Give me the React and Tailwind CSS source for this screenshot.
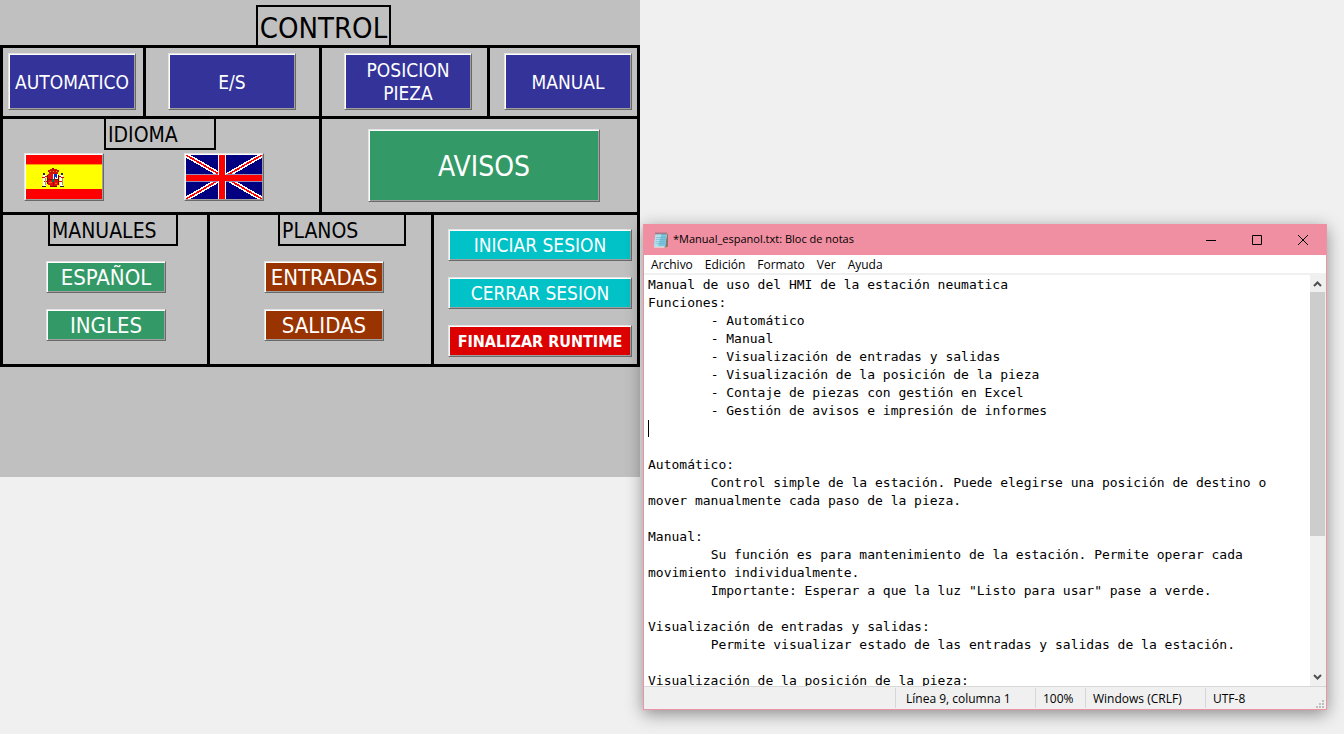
const BEVEL =
  "border border-t-[#e3e3e3] border-l-[#e3e3e3] border-r-[#696969] border-b-[#696969] shadow-[inset_1px_1px_0_#fff,inset_-1px_-1px_0_#a0a0a0]";

const TONES = {
  blue: "bg-[#333399]",
  green: "bg-[#339966]",
  brown: "bg-[#993300]",
  cyan: "bg-[#00c2c7]",
  red: "bg-[#dd0000]",
};

function HmiButton({ tone, className, children }) {
  return (
    <button type="button" className={`${BEVEL} ${TONES[tone]} flex items-center justify-center text-center text-white ${className}`}>
      {children}
    </button>
  );
}

function SectionTitle({ className, children }) {
  return (
    <h2 className={`h-[31px] border-2 border-t-0 border-black pl-[2px] text-[21px] leading-[32px] ${className}`}>{children}</h2>
  );
}

function SpainFlag() {
  return (
    <svg viewBox="0 0 76 44" className="block h-[44px] w-[76px]" shapeRendering="crispEdges" aria-hidden="true">
      <rect width="76" height="44" fill="#ff0000" />
      <rect y="9" width="76" height="25" fill="#ffff00" />
      <rect y="9" width="76" height="1" fill="#ff9900" />
      <rect x="17" y="20" width="3" height="11" fill="#fff" />
      <rect x="34" y="20" width="3" height="11" fill="#fff" />
      <path d="M17 18h2v2h-2zM35 18h2v2h-2zM16 31h4v1h-4zM34 31h4v1h-4z" fill="#222" />
      <path d="M16 22h3v1h-3zM18 26h3v1h-3zM35 22h3v1h-3zM33 26h3v1h-3zM19 21h2v1h-2zM33 21h2v1h-2z" fill="#d00" />
      <path d="M19 23h1v7h-1zM36 23h1v7h-1z" fill="#999" />
      <path d="M24 14h7v1h2v2h-1v2h-9v-2h-1v-2h2z" fill="#c81400" />
      <path d="M26 13h2v1h-2z" fill="#900" />
      <path d="M24 16h1v1h-1zM27 16h1v1h-1zM30 16h1v1h-1z" fill="#f80" />
      <path d="M22 19h10v11h-1v1h-7v-1h-2z" fill="#e01010" />
      <path d="M27 19h5v5h-5z" fill="#fff" />
      <path d="M28 19h3v4h-1v-1h-1v2h-1z" fill="#0033cc" />
      <path d="M21 20h1v9h-1zM32 20h1v10h-1zM24 31h7v1h-7z" fill="#7a0000" />
      <path d="M22 24h10v1h-10zM27 24h1v7h-1z" fill="#a00000" />
      <path d="M26 24h2v3h-2z" fill="#007050" />
      <path d="M23 27h3v1h-3zM29 28h2v1h-2z" fill="#f60" />
    </svg>
  );
}

function UkFlag() {
  return (
    <svg viewBox="0 0 76 44" className="block h-[44px] w-[76px]" shapeRendering="crispEdges" aria-hidden="true">
      <rect width="76" height="44" fill="#000080" />
      <path d="M0 0L76 44M76 0L0 44" stroke="#fff" strokeWidth="4.6" />
      <path d="M0 0L76 44M76 0L0 44" stroke="#ff0000" strokeWidth="1.6" />
      <rect y="19" width="76" height="8" fill="#9a8cb8" />
      <rect x="32" width="8" height="44" fill="#fff" />
      <rect y="20" width="76" height="6" fill="#ff0000" />
      <rect x="33" width="6" height="44" fill="#ff0000" />
    </svg>
  );
}

function FlagButton({ label, children }) {
  return (
    <button type="button" aria-label={label} className="h-[48px] w-[80px] border border-t-[#e3e3e3] border-l-[#e3e3e3] border-r-[#696969] border-b-[#696969]">
      <span className="block border border-t-white border-l-white border-r-[#a0a0a0] border-b-[#a0a0a0]">{children}</span>
    </button>
  );
}

function ControlPanel() {
  return (
    <main className="self-start bg-[#c0c0c0] pb-[110px] font-['DejaVu_Sans_Condensed','DejaVu_Sans',sans-serif] text-black">
      <header className="flex h-[45px] items-end justify-center pl-[7px]">
        <h1 className="h-[40px] border-2 border-b-0 border-black px-[2px] text-[29px] leading-[42px]">CONTROL</h1>
      </header>

      <div className="border-[3px] border-black">
        <section className="grid h-[71px] grid-cols-[143fr_176fr_168fr_147fr] border-b-[3px] border-black text-[19px] leading-[23px]">
          <div className="border-r-[3px] border-black pt-[5px] pl-[5px]">
            <HmiButton tone="blue" className="h-[57px] w-[128px] pt-px">AUTOMATICO</HmiButton>
          </div>
          <div className="border-r-[3px] border-black pt-[5px] pl-[22px]">
            <HmiButton tone="blue" className="h-[57px] w-[128px] pt-px">E/S</HmiButton>
          </div>
          <div className="border-r-[3px] border-black pt-[5px] pl-[22px]">
            <HmiButton tone="blue" className="h-[57px] w-[128px]">POSICION<br />PIEZA</HmiButton>
          </div>
          <div className="flex justify-end pt-[5px] pr-[5px]">
            <HmiButton tone="blue" className="h-[57px] w-[128px] pt-px">MANUAL</HmiButton>
          </div>
        </section>

        <section className="grid h-[96px] grid-cols-[319fr_315fr] border-b-[3px] border-black">
          <div className="border-r-[3px] border-black">
            <SectionTitle className="ml-[101px] w-[112px]">IDIOMA</SectionTitle>
            <div className="mt-[3px] flex gap-[80px] pl-[21px]">
              <FlagButton label="Español"><SpainFlag /></FlagButton>
              <FlagButton label="English"><UkFlag /></FlagButton>
            </div>
          </div>
          <div className="flex items-center pl-[46px]">
            <HmiButton tone="green" className="h-[73px] w-[232px] pt-[2px] text-[28px]">AVISOS</HmiButton>
          </div>
        </section>

        <section className="grid h-[149px] grid-cols-[207fr_224fr_203fr]">
          <div className="border-r-[3px] border-black">
            <SectionTitle className="ml-[45px] w-[130px]">MANUALES</SectionTitle>
            <div className="mt-[15px] flex flex-col gap-[16px] pl-[43px] text-[22px] leading-[28px]">
              <HmiButton tone="green" className="h-[32px] w-[120px] pt-[2px]">ESPAÑOL</HmiButton>
              <HmiButton tone="green" className="h-[32px] w-[120px] pt-[2px]">INGLES</HmiButton>
            </div>
          </div>
          <div className="border-r-[3px] border-black">
            <SectionTitle className="ml-[68px] w-[128px]">PLANOS</SectionTitle>
            <div className="mt-[15px] flex flex-col gap-[16px] pl-[54px] text-[22px] leading-[28px]">
              <HmiButton tone="brown" className="h-[32px] w-[120px] pt-[2px]">ENTRADAS</HmiButton>
              <HmiButton tone="brown" className="h-[32px] w-[120px] pt-[2px]">SALIDAS</HmiButton>
            </div>
          </div>
          <div className="flex flex-col gap-[16px] pt-[14px] pl-[14px] text-[19px] leading-[28px]">
            <HmiButton tone="cyan" className="h-[32px] w-[184px]">INICIAR SESION</HmiButton>
            <HmiButton tone="cyan" className="h-[32px] w-[184px]">CERRAR SESION</HmiButton>
            <HmiButton tone="red" className="h-[32px] w-[184px] pt-[2px] text-[16px] font-bold">FINALIZAR RUNTIME</HmiButton>
          </div>
        </section>
      </div>
    </main>
  );
}

const DOCUMENT = `Manual de uso del HMI de la estación neumatica
Funciones:
\t- Automático
\t- Manual
\t- Visualización de entradas y salidas
\t- Visualización de la posición de la pieza
\t- Contaje de piezas con gestión en Excel
\t- Gestión de avisos e impresión de informes


Automático:
\tControl simple de la estación. Puede elegirse una posición de destino o mover manualmente cada paso de la pieza.

Manual:
\tSu función es para mantenimiento de la estación. Permite operar cada movimiento individualmente.
\tImportante: Esperar a que la luz "Listo para usar" pase a verde.

Visualización de entradas y salidas:
\tPermite visualizar estado de las entradas y salidas de la estación.

Visualización de la posición de la pieza:`;

function NotepadIcon() {
  return (
    <svg viewBox="0 0 16 16" className="h-4 w-4 shrink-0" aria-hidden="true">
      <path d="M2.5 2h12.3l-1.3 13.5H1z" fill="#f7f3e8" />
      <path d="M14 2h1v12l-1.5 1.5h-2z" fill="#8a7468" />
      <path d="M2.4 2h11.2l-1 12.4H1.2z" fill="#7cc3dc" />
      <path d="M2.4 2h6L5 14.4H1.2z" fill="#b4e2ec" />
      <path d="M3 5.5h9.5M2.8 7.5h9.5M2.6 9.5h9.5M2.4 11.5h9.5" stroke="#62adc8" strokeWidth=".5" />
      <path d="M3 .5v2M5 .5v2M7 .5v2M9 .5v2M11 .5v2M13 .5v2" stroke="#596a70" strokeWidth="1" />
    </svg>
  );
}

function Notepad() {
  return (
    <section className="relative mt-[224px] mr-[17px] ml-[3px] flex h-[486px] flex-col self-start border border-t-0 border-[#ec93a5] bg-white font-['Open_Sans',sans-serif] text-[12px] text-black shadow-[0_4px_16px_rgba(0,0,0,0.42)]">
      <header className="flex h-[31px] shrink-0 items-center bg-[#f08fa1] pl-[9px]">
        <NotepadIcon />
        <h2 className="ml-[4px] flex-1 text-[11px]">*Manual_espanol.txt: Bloc de notas</h2>
        <button type="button" aria-label="Minimizar" className="flex h-full w-[46px] items-center justify-center">
          <svg viewBox="0 0 10 10" className="h-[10px] w-[10px]" shapeRendering="crispEdges"><path d="M0 5h10v1H0z" /></svg>
        </button>
        <button type="button" aria-label="Maximizar" className="flex h-full w-[46px] items-center justify-center">
          <svg viewBox="0 0 10 10" className="h-[10px] w-[10px]" fill="none" stroke="#000"><path d="M.5.5h9v9h-9z" /></svg>
        </button>
        <button type="button" aria-label="Cerrar" className="flex h-full w-[46px] items-center justify-center">
          <svg viewBox="0 0 10 10" className="h-[10px] w-[10px]" fill="none" stroke="#000"><path d="M0 0l10 10M10 0L0 10" /></svg>
        </button>
      </header>

      <nav className="flex h-[20px] shrink-0 items-center gap-[12px] border-b-2 border-[#f0f0f0] pt-[2px] pl-[7px]">
        <button type="button">Archivo</button>
        <button type="button">Edición</button>
        <button type="button">Formato</button>
        <button type="button">Ver</button>
        <button type="button">Ayuda</button>
      </nav>

      <div className="relative flex min-h-0 flex-1">
        <textarea
          aria-label="Documento"
          spellCheck={false}
          defaultValue={DOCUMENT}
          className="block h-full min-w-0 flex-1 resize-none overflow-hidden bg-white pt-px pr-[16px] pl-[4px] font-['DejaVu_Sans_Mono',monospace] text-[13px] leading-[18px] outline-none [tab-size:8]"
        />
        <span className="absolute top-[145px] left-[4px] h-[17px] w-px bg-black" />
        <div className="flex w-[16px] shrink-0 flex-col bg-[#f0f0f0] pr-px" aria-hidden="true">
          <svg viewBox="0 0 15 17" className="h-[17px] w-[15px]" fill="none" stroke="#505050" strokeWidth="2"><path d="M4 11l3.5-3.5L11 11" /></svg>
          <div className="h-[244px] bg-[#cdcdcd]" />
          <svg viewBox="0 0 15 17" className="mt-auto h-[17px] w-[15px]" fill="none" stroke="#505050" strokeWidth="2"><path d="M4 6l3.5 3.5L11 6" /></svg>
        </div>
      </div>

      <footer className="flex h-[23px] shrink-0 border-t border-[#d7d7d7] bg-[#f0f0f0] py-px leading-[21px]">
        <span className="flex-1" />
        <span className="w-[140px] border-l border-[#d7d7d7] pl-[10px]">Línea 9, columna 1</span>
        <span className="w-[50px] border-l border-[#d7d7d7] pl-[7px]">100%</span>
        <span className="w-[120px] border-l border-[#d7d7d7] pl-[7px]">Windows (CRLF)</span>
        <span className="flex w-[121px] items-stretch justify-between border-l border-[#d7d7d7] pr-[2px] pl-[7px]">
          UTF-8
          <svg viewBox="0 0 8 8" className="h-[8px] w-[8px] self-end" fill="#bfbfbf" shapeRendering="crispEdges" aria-hidden="true">
            <path d="M6 0h2v2H6zM3 3h2v2H3zM6 3h2v2H6zM0 6h2v2H0zM3 6h2v2H3zM6 6h2v2H6z" />
          </svg>
        </span>
      </footer>
    </section>
  );
}

export default function App() {
  return (
    <div className="grid min-h-screen grid-cols-[20fr_22fr] bg-[#f0f0f0]">
      <ControlPanel />
      <Notepad />
    </div>
  );
}
